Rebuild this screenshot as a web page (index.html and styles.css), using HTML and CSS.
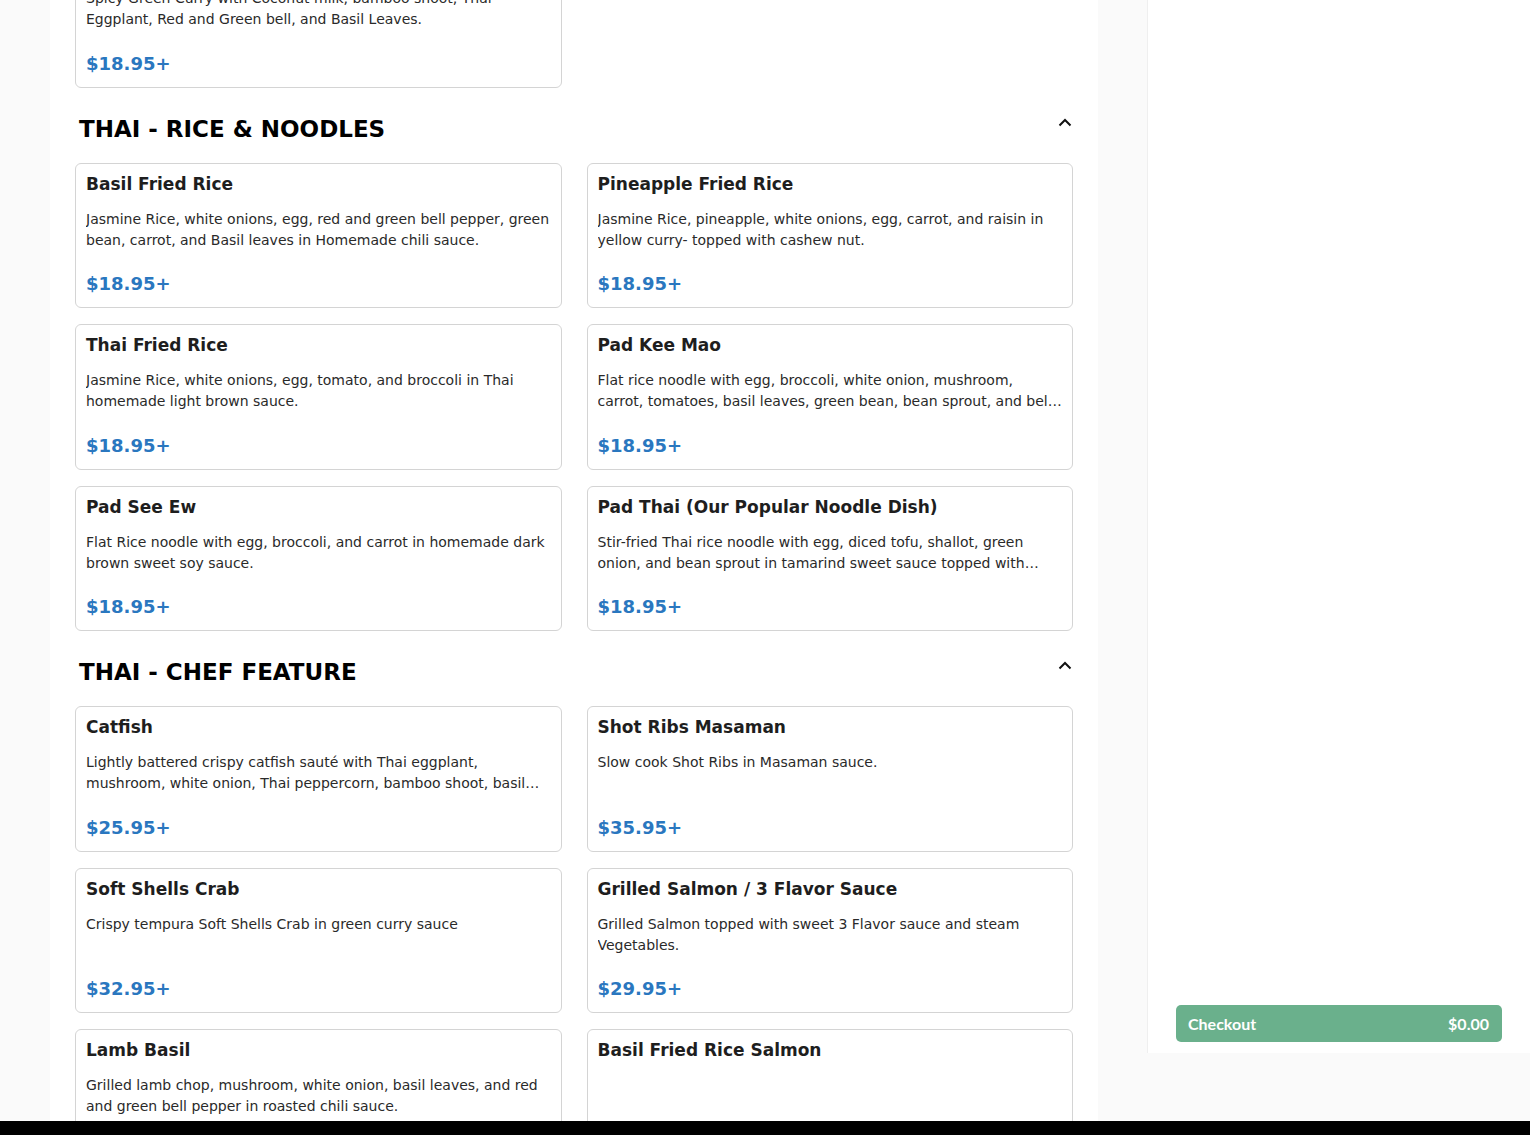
FILE: index.html
```html
<!DOCTYPE html>
<html lang="en">

<head>
	<meta charset="UTF-8">
	<meta name="viewport" content="width=device-width, initial-scale=1.0">
	<title>Menu</title>
	<link rel="stylesheet" href="styles.css">
</head>

<body>
	<div class="page">
		<main class="menu">
			<div class="items items-first">
				<div class="item">
					<h3>Green Curry</h3>
					<p>Spicy Green Curry with Coconut milk, bamboo shoot, Thai Eggplant, Red and Green bell, and Basil Leaves.</p>
					<span class="price">$18.95+</span>
				</div>
			</div>

			<div class="category">
				<h2>THAI - RICE &amp; NOODLES</h2>
				<svg class="toggle" width="14" height="9" viewBox="0 0 14 9"><polyline points="1.5,7.5 7,2 12.5,7.5" fill="none" stroke="#111" stroke-width="2"/></svg>
			</div>
			<div class="items">
				<div class="item">
					<h3>Basil Fried Rice</h3>
					<p>Jasmine Rice, white onions, egg, red and green bell pepper, green bean, carrot, and Basil leaves in Homemade chili sauce.</p>
					<span class="price">$18.95+</span>
				</div>
				<div class="item">
					<h3>Pineapple Fried Rice</h3>
					<p>Jasmine Rice, pineapple, white onions, egg, carrot, and raisin in yellow curry- topped with cashew nut.</p>
					<span class="price">$18.95+</span>
				</div>
				<div class="item">
					<h3>Thai Fried Rice</h3>
					<p>Jasmine Rice, white onions, egg, tomato, and broccoli in Thai homemade light brown sauce.</p>
					<span class="price">$18.95+</span>
				</div>
				<div class="item">
					<h3>Pad Kee Mao</h3>
					<p>Flat rice noodle with egg, broccoli, white onion, mushroom, carrot, tomatoes, basil leaves, green bean, bean sprout, and bell pepper in homemade chili sauce.</p>
					<span class="price">$18.95+</span>
				</div>
				<div class="item">
					<h3>Pad See Ew</h3>
					<p>Flat Rice noodle with egg, broccoli, and carrot in homemade dark brown sweet soy sauce.</p>
					<span class="price">$18.95+</span>
				</div>
				<div class="item">
					<h3>Pad Thai (Our Popular Noodle Dish)</h3>
					<p>Stir-fried Thai rice noodle with egg, diced tofu, shallot, green onion, and bean sprout in tamarind sweet sauce topped with crushed peanut.</p>
					<span class="price">$18.95+</span>
				</div>
			</div>

			<div class="category">
				<h2>THAI - CHEF FEATURE</h2>
				<svg class="toggle" width="14" height="9" viewBox="0 0 14 9"><polyline points="1.5,7.5 7,2 12.5,7.5" fill="none" stroke="#111" stroke-width="2"/></svg>
			</div>
			<div class="items">
				<div class="item">
					<h3>Catfish</h3>
					<p>Lightly battered crispy catfish sauté with Thai eggplant, mushroom, white onion, Thai peppercorn, bamboo shoot, basil leaves, and bell pepper in chili sauce.</p>
					<span class="price">$25.95+</span>
				</div>
				<div class="item">
					<h3>Shot Ribs Masaman</h3>
					<p>Slow cook Shot Ribs in Masaman sauce.</p>
					<span class="price">$35.95+</span>
				</div>
				<div class="item">
					<h3>Soft Shells Crab</h3>
					<p>Crispy tempura Soft Shells Crab in green curry sauce</p>
					<span class="price">$32.95+</span>
				</div>
				<div class="item">
					<h3>Grilled Salmon / 3 Flavor Sauce</h3>
					<p>Grilled Salmon topped with sweet 3 Flavor sauce and steam Vegetables.</p>
					<span class="price">$29.95+</span>
				</div>
				<div class="item">
					<h3>Lamb Basil</h3>
					<p>Grilled lamb chop, mushroom, white onion, basil leaves, and red and green bell pepper in roasted chili sauce.</p>
					<span class="price">$32.95+</span>
				</div>
				<div class="item">
					<h3>Basil Fried Rice Salmon</h3>
					<p></p>
					<span class="price">$24.95+</span>
				</div>
			</div>
		</main>

		<aside class="cart">
			<button class="checkout">
				<span>Checkout</span>
				<span>$0.00</span>
			</button>
		</aside>
	</div>

	<div class="footer-bar"></div>
</body>

</html>
```

FILE: styles.css
```css
* {
	margin: 0;
	padding: 0;
	box-sizing: border-box;
}

html,
body {
	width: 100%;
	height: 100%;
	overflow: hidden;
}

body {
	background: #fafafa;
	font-family: "DejaVu Sans", sans-serif;
	color: #222;
}

.page {
	display: flex;
	align-items: flex-start;
	padding-left: 50px;
	gap: 49px;
}

.menu {
	width: 1048px;
	background: #fff;
	padding: 0 25px 40px;
}

.items {
	display: grid;
	grid-template-columns: 1fr 1fr;
	column-gap: 25px;
	row-gap: 16px;
}

/* list is scrolled: first card sits partly above the top */
.items-first {
	margin-top: -58px;
}

.item {
	border: 1px solid #d4d4d4;
	border-radius: 6px;
	padding: 10px 10px 12px;
	height: 145.5px;
	display: flex;
	flex-direction: column;
}

.item h3 {
	font-size: 17px;
	line-height: 20px;
	font-weight: bold;
	color: #1e1e1e;
}

.item p {
	margin-top: 15px;
	font-size: 14px;
	line-height: 21px;
	height: 42px;
	color: #2a2a2a;
	overflow: hidden;
	display: -webkit-box;
	-webkit-line-clamp: 2;
	-webkit-box-orient: vertical;
}

.price {
	margin-top: auto;
	font-size: 18px;
	line-height: 22px;
	font-weight: bold;
	color: #2a77bf;
}

.category {
	display: flex;
	justify-content: space-between;
	align-items: flex-start;
	padding: 27px 1px 20px 4px;
}

.category h2 {
	font-size: 23px;
	line-height: 28px;
	font-weight: bold;
	color: #000;
}

.toggle {
	margin-top: 3px;
}

.cart {
	width: 383px;
	height: 1053px;
	background: #fff;
	border-left: 1px solid #efefef;
	display: flex;
	flex-direction: column;
	justify-content: flex-end;
	padding: 0 28px 11px 28px;
}

.checkout {
	display: flex;
	justify-content: space-between;
	align-items: center;
	height: 37px;
	padding: 0 13px 1px 12px;
	border: none;
	border-radius: 5px;
	background: #6ab08c;
	color: #fff;
	font-family: "Lato", sans-serif;
	font-weight: bold;
	font-size: 16px;
}

.footer-bar {
	position: fixed;
	left: 0;
	right: 0;
	bottom: 0;
	height: 14px;
	background: #000;
}
```
